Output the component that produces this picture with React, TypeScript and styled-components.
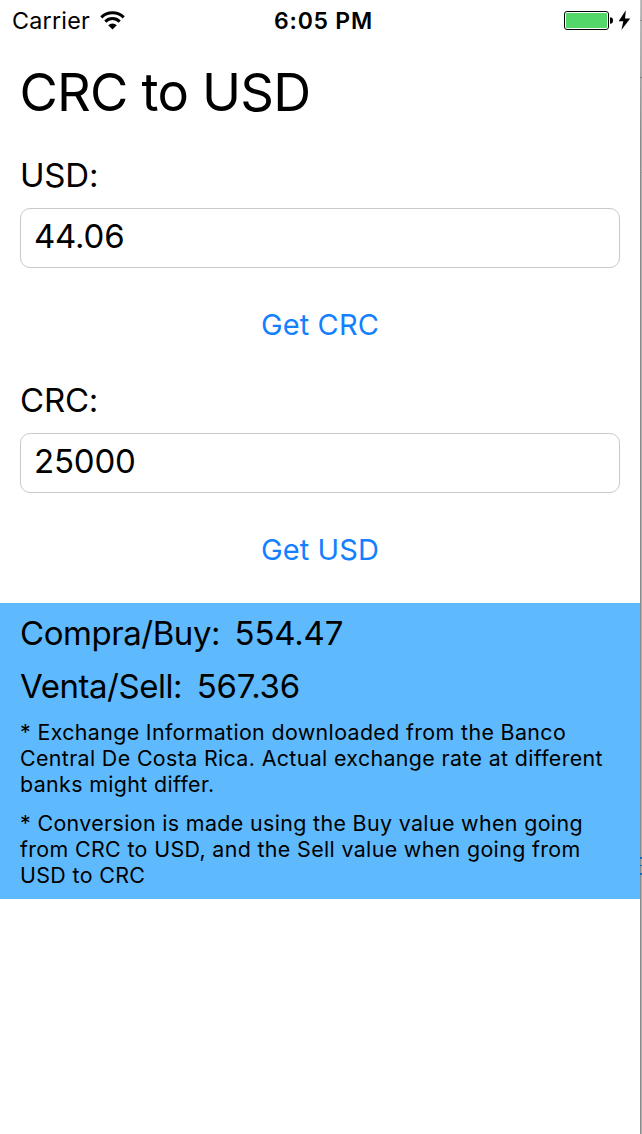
import React, { useState } from "react";
import styled, { createGlobalStyle } from "styled-components";

const GlobalStyle = createGlobalStyle`
  * { box-sizing: border-box; }
  body { margin: 0; background: #fff; }
`;

const Window = styled.div`
  display: flex;
  width: 642px;
  height: 1134px;
  overflow: hidden;
  font-family: Inter, "Liberation Sans", sans-serif;
  color: #000;
`;

const Screen = styled.main`
  display: flex;
  flex-direction: column;
  width: 640px;
  background: #fff;
`;

const WindowEdge = styled.svg`
  display: block;
  width: 2px;
  height: 1134px;
`;

const StatusBar = styled.header`
  display: grid;
  grid-template-columns: 1fr auto 1fr;
  align-items: center;
  height: 40px;
  padding: 1px 9px 0 12px;
`;

const Carrier = styled.div`
  display: flex;
  align-items: center;
  gap: 10px;
  font-size: 23.3px;
  line-height: 28px;
  letter-spacing: 0.25px;
`;

const Clock = styled.time`
  padding: 1px 0 0 4px;
  font-size: 23px;
  font-weight: 600;
  line-height: 28px;
  letter-spacing: 0.75px;
`;

const Power = styled.div`
  display: flex;
  justify-content: flex-end;
`;

const Title = styled.h1`
  margin: 20px 20px 31px 19.5px;
  font-size: 52.5px;
  font-weight: 400;
  line-height: 64px;
  letter-spacing: -0.8px;
`;

const Converter = styled.section`
  display: flex;
  flex-direction: column;
  height: 225px;
  padding: 0 20px;

  & + & { height: 223px; }
`;

const Label = styled.label`
  margin-bottom: 13px;
  font-size: 33px;
  line-height: 40px;
  letter-spacing: -0.2px;
`;

const Field = styled.input`
  height: 60px;
  padding: 0 13px 4px;
  border: 1px solid #c9c9c9;
  border-radius: 10px;
  outline: none;
  background: #fff;
  color: #000;
  font: 400 33px Inter, "Liberation Sans", sans-serif;
  letter-spacing: -0.2px;
`;

const Action = styled.button`
  align-self: center;
  margin-top: 39px;
  padding: 0;
  border: 0;
  background: none;
  color: #1380ff;
  font: 400 29px/36px Inter, "Liberation Sans", sans-serif;
  letter-spacing: 0.1px;
`;

const Rates = styled.section`
  display: flex;
  flex-direction: column;
  gap: 13px;
  height: 296px;
  padding: 10px 20px;
  background: #5fb9fd;
`;

const Rate = styled.div`
  display: flex;
  gap: 14.5px;
  font-size: 33px;
  line-height: 40px;
`;

const RateName = styled.span`
  letter-spacing: -0.45px;
`;

const RateValue = styled.span`
  letter-spacing: -0.2px;
`;

const Note = styled.p`
  margin: 0;
  font-size: 21.4px;
  line-height: 26px;
  letter-spacing: 0.36px;
`;

const WifiIcon = () => (
  <svg width="25" height="19" viewBox="0 0 25 19" aria-hidden="true">
    <g fill="none" stroke="#000" strokeWidth="3">
      <path d="M1.3 6.4A16 16 0 0 1 23.7 6.4" />
      <path d="M5.3 10.6A10.2 10.2 0 0 1 19.7 10.6" />
    </g>
    <path d="M8.2 14.2A6.2 6.2 0 0 1 16.8 14.2L12.5 18.5Z" />
  </svg>
);

const BatteryIcon = () => (
  <svg width="67" height="21" viewBox="0 0 67 21" aria-hidden="true">
    <rect x="0.5" y="1.5" width="44" height="18" rx="2.5" fill="#fff" stroke="#000" />
    <rect x="2" y="3" width="41" height="15" rx="1" fill="#53d769" />
    <path d="M46 7.2Q49 7.2 49 10.5T46 13.8Z" />
    <path d="M61.8 0.2L54.6 11.2H59.3L57.4 20L66.2 8.5H61Z" />
  </svg>
);

interface ConversionProps {
  id: string;
  label: string;
  initial: string;
  action: string;
}

function Conversion({ id, label, initial, action }: ConversionProps) {
  const [value, setValue] = useState(initial);
  return (
    <Converter>
      <Label htmlFor={id}>{label}</Label>
      <Field id={id} value={value} onChange={(e) => setValue(e.target.value)} />
      <Action type="button">{action}</Action>
    </Converter>
  );
}

export default function App() {
  return (
    <Window>
      <GlobalStyle />
      <Screen>
        <StatusBar>
          <Carrier>
            Carrier
            <WifiIcon />
          </Carrier>
          <Clock>6:05 PM</Clock>
          <Power>
            <BatteryIcon />
          </Power>
        </StatusBar>
        <Title>CRC to USD</Title>
        <Conversion id="usd" label="USD:" initial="44.06" action="Get CRC" />
        <Conversion id="crc" label="CRC:" initial="25000" action="Get USD" />
        <Rates>
          <Rate>
            <RateName>Compra/Buy:</RateName>
            <RateValue>554.47</RateValue>
          </Rate>
          <Rate>
            <RateName>Venta/Sell:</RateName>
            <RateValue>567.36</RateValue>
          </Rate>
          <Note>
            * Exchange Information downloaded from the Banco Central De Costa Rica. Actual
            exchange rate at different banks might differ.
          </Note>
          <Note>
            * Conversion is made using the Buy value when going from CRC to USD, and the Sell
            value when going from USD to CRC
          </Note>
        </Rates>
      </Screen>
      <WindowEdge viewBox="0 0 2 1134" aria-hidden="true">
        <defs>
          <linearGradient id="edge" x1="0" y1="0" x2="0" y2="1">
            <stop offset="0" stopColor="#c4c4c4" />
            <stop offset="0.12" stopColor="#8b8b8b" />
          </linearGradient>
        </defs>
        <rect width="1" height="1134" fill="url(#edge)" />
        <rect x="1" width="1" height="1134" fill="#b1b1b1" />
        <rect y="20" width="2" height="1" fill="#8b8b8b" />
        <rect y="77" width="2" height="1" fill="#858585" />
        <rect y="172" width="2" height="1" fill="#999" />
        <rect y="857" width="2" height="2" fill="#1f69b3" />
        <rect y="865" width="2" height="1" fill="#1f69b3" />
        <rect y="873" width="2" height="2" fill="#1f69b3" />
      </WindowEdge>
    </Window>
  );
}
